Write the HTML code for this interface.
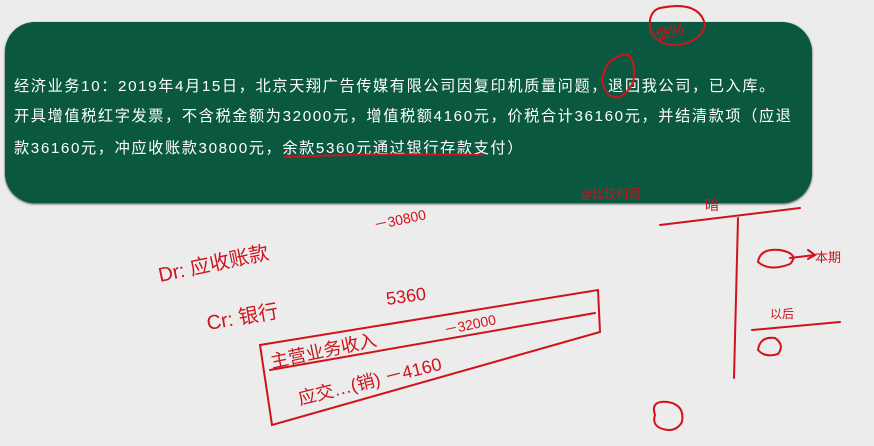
<!DOCTYPE html>
<html><head><meta charset="utf-8"><style>
body{margin:0;width:874px;height:446px;background:#ebeceb;overflow:hidden;position:relative;font-family:"Liberation Sans","Noto Sans CJK SC",sans-serif}
.box{position:absolute;left:5px;top:22px;width:807px;height:181px;background:#0b5841;border-radius:30px;box-shadow:0 1px 2px #444}
.t{position:absolute;left:14px;color:#fff;font-size:15.2px;white-space:nowrap;letter-spacing:1.6px}
svg{position:absolute;left:0;top:0}
</style></head><body>
<div class="box"></div>
<div class="t" style="top:74px">经济业务10：2019年4月15日，北京天翔广告传媒有限公司因复印机质量问题，退回我公司，已入库。</div>
<div class="t" style="top:104px">开具增值税红字发票，不含税金额为32000元，增值税额4160元，价税合计36160元，并结清款项（应退</div>
<div class="t" style="top:136px">款36160元，冲应收账款30800元，余款5360元通过银行存款支付）</div>
<svg width="874" height="446" fill="none" stroke="#d0121b" stroke-width="2" stroke-linecap="round">
<path d="M284 157 Q380 153 482 155"/>
<path d="M622 55 Q605 60 602 80 Q605 100 620 97 Q640 85 632 60 Q628 52 622 55"/>
<path d="M660 8 Q700 0 705 25 Q700 45 670 45 Q648 40 650 20 Q652 10 660 8"/>
<text x="656" y="38" fill="#d0121b" stroke="none" font-size="14" transform="rotate(-15 666 32)">個别</text>
<text x="580" y="198" fill="#d0121b" stroke="none" font-size="12">@比较利润</text>
<text x="705" y="210" fill="#d0121b" stroke="none" font-size="14">暗</text>
<path d="M660 225 L800 208"/>
<path d="M738 218 L734 378"/>
<path d="M758 262 Q760 248 780 250 Q800 254 790 264 Q770 272 758 262"/>
<path d="M790 258 L815 255 M808 250 L815 255 L808 259"/>
<text x="815" y="262" fill="#d0121b" stroke="none" font-size="13">本期</text>
<text x="770" y="318" fill="#d0121b" stroke="none" font-size="12">以后</text>
<path d="M752 330 L840 322"/>
<path d="M758 350 Q760 336 775 338 Q785 345 778 354 Q765 358 758 350"/>
<path d="M655 415 Q650 400 668 402 Q685 405 682 422 Q675 434 660 428 Q652 424 655 415"/>
<text x="160" y="282" fill="#d0121b" stroke="none" font-size="20" transform="rotate(-12 160 282)">Dr: 应收账款</text>
<text x="375" y="230" fill="#d0121b" stroke="none" font-size="14" transform="rotate(-12 375 230)">－30800</text>
<text x="208" y="330" fill="#d0121b" stroke="none" font-size="20" transform="rotate(-10 208 330)">Cr: 银行</text>
<text x="387" y="305" fill="#d0121b" stroke="none" font-size="18" transform="rotate(-8 387 305)">5360</text>
<path d="M260 345 L598 290 L600 332 L272 425 Z"/>
<path d="M270 370 L595 313"/>
<text x="272" y="368" fill="#d0121b" stroke="none" font-size="18" transform="rotate(-12 272 368)">主营业务收入</text>
<text x="445" y="335" fill="#d0121b" stroke="none" font-size="14" transform="rotate(-12 445 335)">－32000</text>
<text x="300" y="405" fill="#d0121b" stroke="none" font-size="18" transform="rotate(-14 300 405)">应交…(销)  －4160</text>
</svg>
</body></html>
